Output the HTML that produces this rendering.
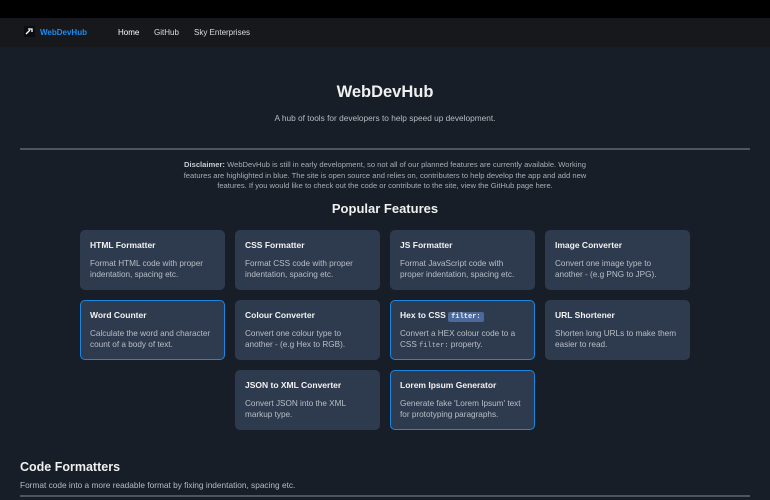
<!DOCTYPE html>
<html><head><style>
*{margin:0;padding:0;box-sizing:border-box}
body{width:770px;height:500px;overflow:hidden;background:#171e27;font-family:"Liberation Sans",sans-serif;color:#e6e6e6;position:relative}
.top{position:absolute;left:0;top:0;width:770px;height:18px;background:#000}
.nav{position:absolute;left:0;top:18px;width:770px;height:29px;background:#17181c;font-size:8px}
.nav span{position:absolute;top:10px}
.logo{position:absolute;left:24px;top:8px;width:11px;height:11px;background:#0c0d10}
h1{position:absolute;top:83px;width:770px;text-align:center;font-size:16.5px;font-weight:bold;color:#f0f0f0}
.sub{position:absolute;top:113px;width:770px;text-align:center;font-size:8.3px;color:#b8bcc2}
.hr{position:absolute;left:20px;width:730px;height:2px;background:#50555c}
.disc{position:absolute;top:160px;left:180px;width:410px;text-align:center;font-size:7.6px;line-height:10.5px;color:#a9adb3}
h2{position:absolute;top:201px;width:770px;text-align:center;font-size:13px;font-weight:bold;color:#f0f0f0}
.card{position:absolute;width:145px;height:60px;background:#2e3b4e;border-radius:5px;padding:10px 10px}
.card.b{border:1px solid #1c86e0;padding:9px}
.card .t{font-size:8.5px;font-weight:bold;color:#f2f2f2;margin-top:0;height:19px}
.card .d{font-size:8.2px;color:#b9bec6;line-height:10.7px}
code{font-family:"Liberation Mono",monospace;font-size:7px}
.pill{background:#4b6a9b;border-radius:2px;padding:1px 3px;color:#e8eef8}
h3{position:absolute;top:460px;left:20px;font-size:12.5px;font-weight:bold;color:#f0f0f0}
.cf{position:absolute;top:480px;left:20px;font-size:8.3px;color:#b8bcc2}
</style></head><body>
<div class="top"></div>
<div class="nav">
<div class="logo"><svg width="11" height="11" viewBox="0 0 11 11"><path d="M2 8 L6 4 M4 3 L8 3 L8 6" stroke="#fff" stroke-width="1.3" fill="none"/></svg></div>
<span style="left:40px;color:#1d8cf0;font-weight:bold">WebDevHub</span>
<span style="left:118px;color:#fff">Home</span>
<span style="left:154px;color:#ddd">GitHub</span>
<span style="left:194px;color:#ddd">Sky Enterprises</span>
</div>
<h1>WebDevHub</h1>
<div class="sub">A hub of tools for developers to help speed up development.</div>
<div class="hr" style="top:148px"></div>
<div class="disc"><b style="color:#c8ccd2">Disclaimer:</b> WebDevHub is still in early development, so not all of our planned features are currently available. Working features are highlighted in blue. The site is open source and relies on, contributers to help develop the app and add new features. If you would like to check out the code or contribute to the site, view the GitHub page here.</div>
<h2>Popular Features</h2>
<div class="card" style="left:80px;top:230px"><div class="t">HTML Formatter</div><div class="d">Format HTML code with proper indentation, spacing etc.</div></div>
<div class="card" style="left:235px;top:230px"><div class="t">CSS Formatter</div><div class="d">Format CSS code with proper indentation, spacing etc.</div></div>
<div class="card" style="left:390px;top:230px"><div class="t">JS Formatter</div><div class="d">Format JavaScript code with proper indentation, spacing etc.</div></div>
<div class="card" style="left:545px;top:230px"><div class="t">Image Converter</div><div class="d">Convert one image type to another - (e.g PNG to JPG).</div></div>
<div class="card b" style="left:80px;top:300px"><div class="t">Word Counter</div><div class="d">Calculate the word and character count of a body of text.</div></div>
<div class="card" style="left:235px;top:300px"><div class="t">Colour Converter</div><div class="d">Convert one colour type to another - (e.g Hex to RGB).</div></div>
<div class="card b" style="left:390px;top:300px"><div class="t">Hex to CSS <code class="pill">filter:</code></div><div class="d">Convert a HEX colour code to a CSS <code>filter:</code> property.</div></div>
<div class="card" style="left:545px;top:300px"><div class="t">URL Shortener</div><div class="d">Shorten long URLs to make them easier to read.</div></div>
<div class="card" style="left:235px;top:370px"><div class="t">JSON to XML Converter</div><div class="d">Convert JSON into the XML markup type.</div></div>
<div class="card b" style="left:390px;top:370px"><div class="t">Lorem Ipsum Generator</div><div class="d">Generate fake 'Lorem Ipsum' text for prototyping paragraphs.</div></div>
<h3>Code Formatters</h3>
<div class="cf">Format code into a more readable format by fixing indentation, spacing etc.</div>
<div class="hr" style="top:495px"></div>
</body></html>
